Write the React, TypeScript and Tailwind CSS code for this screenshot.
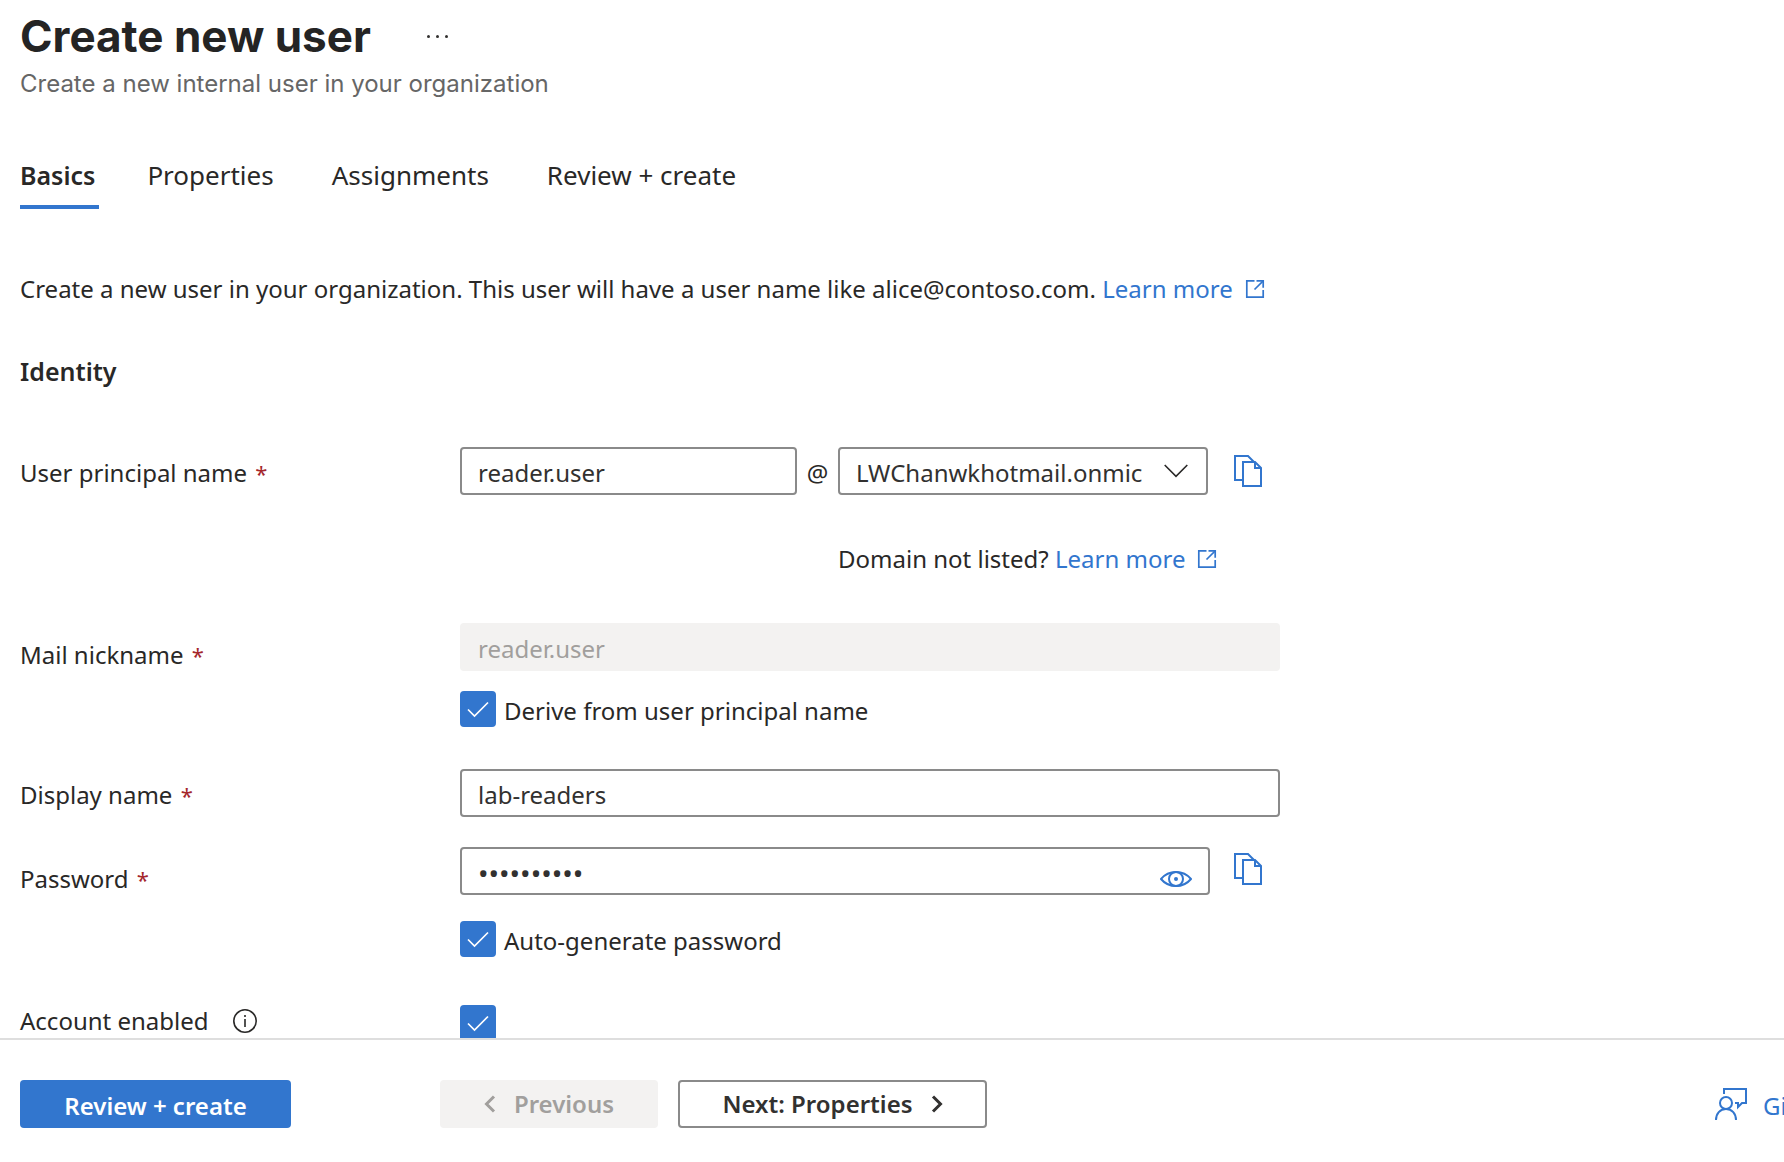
import { useState, type ReactNode } from "react";

function CopyIcon() {
  return (
    <svg viewBox="0 0 28 32" className="h-8 w-7" fill="none" stroke="currentColor" strokeWidth="2">
      <path d="M9 25H1V1h13l6 6" />
      <path d="M9 7h12l6 6v18H9z" />
      <path d="M21 7v6h6" />
    </svg>
  );
}

function ExternalIcon() {
  return (
    <svg viewBox="0 0 20 20" className="h-5 w-5" fill="none" stroke="currentColor" strokeWidth="1.7">
      <path d="M9.500 1.800H1.800v16.400h16.400v-7.200" />
      <path d="M11.500 1.800h6.700v7" />
      <path d="M18.200 1.800 9.500 10.500" />
    </svg>
  );
}

function EyeIcon() {
  return (
    <svg viewBox="0 0 32 16" className="h-4 w-8" fill="none" stroke="currentColor" strokeWidth="2">
      <path d="M1 8C5 3.2 10 1 16 1s11 2.200 15 7c-4 4.800-9 7-15 7S5 12.800 1 8z" />
      <circle cx="16" cy="8" r="7" />
      <circle cx="16" cy="8" r="2" fill="currentColor" stroke="none" />
    </svg>
  );
}

function InfoIcon() {
  return (
    <svg viewBox="0 0 24 24" className="h-6 w-6" fill="none" stroke="currentColor" strokeWidth="1.6">
      <circle cx="12" cy="12" r="11.2" />
      <path d="M12 10v8M12 6v2" />
    </svg>
  );
}

function FeedbackIcon() {
  return (
    <svg viewBox="0 0 32 32" className="h-8 w-8" fill="none" stroke="currentColor" strokeWidth="2">
      <path d="M9 6V1h22v14h-4l-4 4v-4h-3" />
      <circle cx="11" cy="15" r="6" />
      <path d="M1 32c0-6.500 4-11 10-11s10 4.500 10 11" />
    </svg>
  );
}

function Chevron({ flip = false }: { flip?: boolean }) {
  return (
    <svg viewBox="0 0 12 18" className="h-[18px] w-3" fill="none" stroke="currentColor" strokeWidth="3">
      <path d={flip ? "M10 1.500 2.500 9l7.500 7.500" : "M2 1.500 9.500 9 2 16.500"} />
    </svg>
  );
}

function Checkbox({ id, label }: { id: string; label?: string }) {
  const [on, setOn] = useState(true);
  return (
    <div className="flex items-center gap-2">
      <span className="grid h-9 w-9 shrink-0">
        <input
          id={id}
          type="checkbox"
          checked={on}
          onChange={() => setOn(!on)}
          className="col-start-1 row-start-1 h-9 w-9 appearance-none rounded border-2 border-[#3276ce] bg-white checked:bg-[#3276ce]"
        />
        {on && (
          <svg viewBox="0 0 36 36" className="pointer-events-none col-start-1 row-start-1 h-9 w-9" fill="none" stroke="#fff" strokeWidth="1.700">
            <path d="m8 18.500 6.500 6.500L28 11.500" />
          </svg>
        )}
      </span>
      {label && (
        <label htmlFor={id} className="pt-1 leading-8">
          {label}
        </label>
      )}
    </div>
  );
}

function Row({ id, label, low = false, children }: { id: string; label: string; low?: boolean; children: ReactNode }) {
  return (
    <div className="flex items-start">
      <label htmlFor={id} className={low ? "w-[440px] shrink-0 pt-4 leading-8" : "w-[440px] shrink-0 pt-[10px] leading-8"}>
        {label} <span className="pl-[2px] text-[22px] text-[#a4262c]">*</span>
      </label>
      <div className="w-[820px]">{children}</div>
    </div>
  );
}

const field = "h-12 rounded border-2 border-[#8a8a8a] bg-white px-4 text-[#323130] outline-none";

function LearnMore() {
  return (
    <a href="#learn" className="inline-flex items-center gap-3 text-[#3276ce]">
      Learn more
      <ExternalIcon />
    </a>
  );
}

export default function App() {
  const [upn, setUpn] = useState("reader.user");
  const [display, setDisplay] = useState("lab-readers");
  const [password, setPassword] = useState("abcdefghij");
  const tabs = ["Properties", "Assignments", "Review + create"];

  return (
    <div className="flex h-screen flex-col overflow-hidden bg-white font-['Noto_Sans','Segoe_UI',sans-serif] text-[24px] text-[#292827]">
      <main className="min-h-0 flex-1 overflow-hidden px-5 pt-2">
        <header className="font-['Inter',sans-serif]">
          <div className="flex items-center gap-14">
            <h1 className="text-[44px] leading-[56px] font-bold text-[#242424]">Create new user</h1>
            <button type="button" aria-label="More actions" className="flex gap-[6px]">
              <span className="h-[3px] w-[3px] rounded-full bg-[#323130]" />
              <span className="h-[3px] w-[3px] rounded-full bg-[#323130]" />
              <span className="h-[3px] w-[3px] rounded-full bg-[#323130]" />
            </button>
          </div>
          <p className="mt-1 leading-8 text-[#666]">Create a new internal user in your organization</p>
        </header>

        <nav className="mt-[55px] flex items-start gap-[58px] text-[26px] leading-10">
          <button type="button" className="mr-[-10px] border-b-4 border-[#3276ce] pr-1 pb-[10px] text-[25px] font-semibold">
            Basics
          </button>
          {tabs.map((t) => (
            <button type="button" key={t}>
              {t}
            </button>
          ))}
        </nav>

        <p className="mt-16 leading-8">
          Create a new user in your organization. This user will have a user name like alice@contoso.com. <LearnMore />
        </p>

        <h2 className="mt-[50px] text-[25px] leading-8 font-semibold">Identity</h2>

        <form className="mt-[60px]">
          <Row id="upn" label="User principal name">
            <div className="flex items-center">
              <input id="upn" value={upn} onChange={(e) => setUpn(e.target.value)} className={`${field} w-[337px] pt-[2px]`} />
              <span className="w-[41px] pt-1 text-center">@</span>
              <div className="grid w-[370px] items-center">
                <select aria-label="Domain" className={`${field} col-start-1 row-start-1 w-full appearance-none pt-1 pr-14`}>
                  <option>LWChanwkhotmail.onmic</option>
                </select>
                <svg viewBox="0 0 24 14" className="pointer-events-none col-start-1 row-start-1 mr-5 h-[14px] w-6 justify-self-end" fill="none" stroke="currentColor" strokeWidth="1.600">
                  <path d="m.700 1 11.300 11.300L23.300 1" />
                </svg>
              </div>
              <button type="button" aria-label="Copy user principal name" className="ml-[26px] text-[#3276ce]">
                <CopyIcon />
              </button>
            </div>
            <p className="mt-12 ml-[378px] leading-8">
              Domain not listed? <LearnMore />
            </p>
          </Row>

          <div className="mt-12">
            <Row id="nick" label="Mail nickname" low>
              <input id="nick" value={upn} disabled className="block h-12 w-full rounded bg-[#f3f2f1] px-[18px] pt-[2px] text-[#a19f9d]" />
              <div className="mt-5">
                <Checkbox id="derive" label="Derive from user principal name" />
              </div>
            </Row>
          </div>

          <div className="mt-[42px]">
            <Row id="display" label="Display name">
              <input id="display" value={display} onChange={(e) => setDisplay(e.target.value)} className={`${field} block w-full pt-[2px]`} />
            </Row>
          </div>

          <div className="mt-[30px]">
            <Row id="password" label="Password" low>
              <div className="flex items-start">
                <div className="grid w-[750px]">
                  <input
                    id="password"
                    type="password"
                    value={password}
                    onChange={(e) => setPassword(e.target.value)}
                    className={`${field} col-start-1 row-start-1 w-full pt-1 text-[28px]`}
                  />
                  <button type="button" aria-label="Show password" className="col-start-1 row-start-1 mr-[18px] mb-2 self-end justify-self-end text-[#3276ce]">
                    <EyeIcon />
                  </button>
                </div>
                <button type="button" aria-label="Copy password" className="mt-[6px] ml-6 text-[#3276ce]">
                  <CopyIcon />
                </button>
              </div>
              <div className="mt-[26px]">
                <Checkbox id="auto" label="Auto-generate password" />
              </div>
            </Row>
          </div>

          <div className="mt-12 flex items-start">
            <div className="flex w-[440px] items-center gap-6">
              <label htmlFor="enabled" className="leading-8">
                Account enabled
              </label>
              <InfoIcon />
            </div>
            <Checkbox id="enabled" />
          </div>
        </form>
      </main>

      <footer className="flex shrink-0 items-center overflow-hidden border-t-2 border-[#dedede] pt-10 pb-[34px] pl-5">
        <button type="button" className="h-12 w-[271px] shrink-0 rounded bg-[#3276ce] pt-1 font-semibold text-white">
          Review + create
        </button>
        <button type="button" disabled className="ml-[149px] flex h-12 w-[218px] shrink-0 items-center justify-center gap-[18px] rounded bg-[#f3f2f1] font-semibold text-[#a19f9d]">
          <Chevron flip />
          Previous
        </button>
        <button type="button" className="ml-5 flex h-12 w-[309px] shrink-0 items-center justify-center gap-[18px] rounded border-2 border-[#8a8a8a] font-semibold text-[#323130]">
          Next: Properties
          <Chevron />
        </button>
        <a href="#feedback" className="ml-auto flex w-[69px] shrink-0 items-center gap-4 overflow-hidden whitespace-nowrap text-[#3276ce]">
          <span className="shrink-0">
            <FeedbackIcon />
          </span>
          <span className="pt-1">Gi</span>
        </a>
      </footer>
    </div>
  );
}
